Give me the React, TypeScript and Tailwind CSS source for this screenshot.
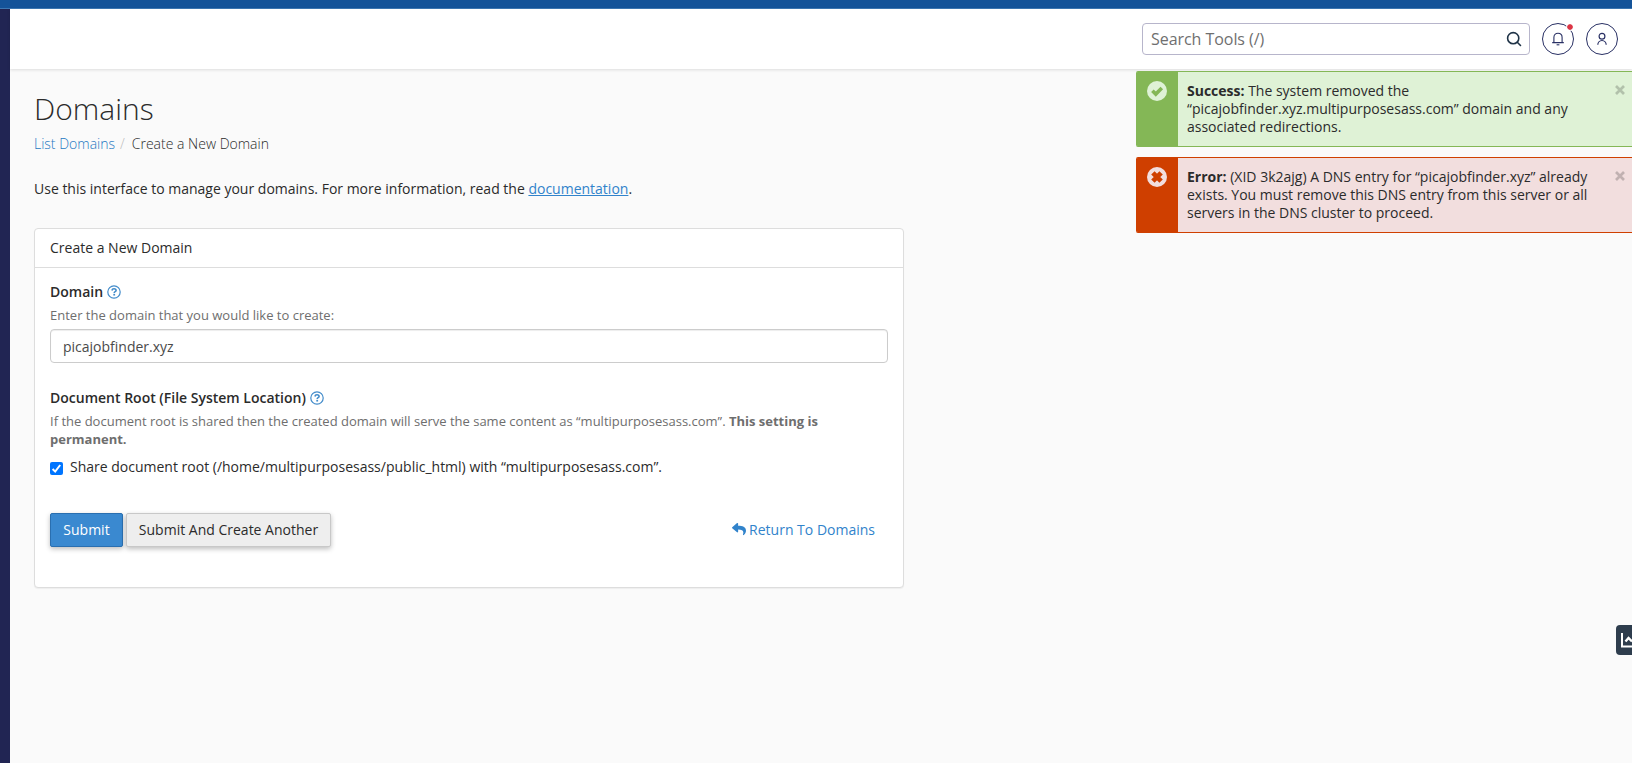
import React from 'react';
import { FaReply } from 'react-icons/fa';

interface AlertProps {
  type: 'success' | 'error';
  label: string;
  children: React.ReactNode;
}

const alertStyles = {
  success: { box: 'border-[#84b756] bg-[#dff2d6]', side: 'bg-[#84b756]', icon: 'text-[#dff2d6]' },
  error: { box: 'border-[#cf3f00] bg-[#f2dede]', side: 'bg-[#cf3f00]', icon: 'text-[#f2dede]' },
};

const Alert: React.FC<AlertProps> = ({ type, label, children }) => {
  const styles = alertStyles[type];

  return (
    <div className={`flex h-[76px] rounded-l-[2px] border-y overflow-hidden ${styles.box}`}>
      <div className={`-my-px flex w-[42px] shrink-0 justify-center pt-[10px] ${styles.side}`}>
        <svg viewBox="0 0 20 20" className={`h-5 w-5 ${styles.icon}`}>
          <circle cx="10" cy="10" r="10" fill="currentColor" />
          {type === 'success' ? (
            <path d="M5.4 9.7l3.4 3.4 6-6" fill="none" stroke="#84b756" strokeWidth="3.6" />
          ) : (
            <path d="M5.9 5.9l8.2 8.2M14.1 5.9l-8.2 8.2" fill="none" stroke="#cf3f00" strokeWidth="4.8" />
          )}
        </svg>
      </div>
      <p className="w-[412px] shrink-0 pl-[9px] pt-[10px] text-[14px] leading-[18px] text-[#2b2b2b]">
        <strong className="font-bold">{label}</strong> {children}
      </p>
      <button className="ml-auto mr-[7px] mt-[13px] h-[10px] w-[10px]" aria-label="Close">
        <svg viewBox="0 0 10 10" className="h-[10px] w-[10px] text-black/20">
          <path d="M1 1l8 8M9 1l-8 8" stroke="currentColor" strokeWidth="2.7" />
        </svg>
      </button>
    </div>
  );
};

const HelpIcon: React.FC = () => (
  <svg viewBox="0 0 14 14" className="h-[14px] w-[14px] text-[#428bca]" fill="none" stroke="currentColor">
    <circle cx="7" cy="7" r="6.2" strokeWidth="1.2" />
    <path d="M4.9 5.5c.2-1.2 1-1.8 2.1-1.8s2.1.7 2.1 1.7c0 1.3-1.9 1.2-1.9 2.5" strokeWidth="1.6" />
    <path d="M6.3 9.7h1.8" strokeWidth="1.7" />
  </svg>
);

const Header: React.FC = () => (
  <header className="relative flex h-[60px] items-center justify-end bg-white pr-[14px] shadow-[0_1px_3px_rgba(0,0,0,0.12)]">
    <div className="flex h-8 w-[388px] items-center justify-between rounded-[4px] border border-[#b7b5cb] pl-2 pr-[7px]">
      <span className="text-[16px] tracking-[-0.05px] text-[#6f6f6f]">Search Tools (/)</span>
      <svg viewBox="0 0 16 16" className="h-4 w-4 text-[#1f3347]" fill="none" stroke="currentColor" strokeWidth="1.6">
        <circle cx="7.2" cy="7.2" r="5.6" />
        <path d="M11.3 11.3l3.2 3.2" strokeLinecap="round" />
      </svg>
    </div>
    <button className="relative ml-3 flex h-8 w-8 items-center justify-center rounded-full border border-[#293064] text-[#293064]">
      <svg viewBox="0 0 14 14" className="h-[14px] w-[14px]" fill="none" stroke="currentColor" strokeWidth="1.1">
        <path d="M1.2 10.6h11.6M2.9 10.6V5.4c0-2.5 1.7-4.1 4.1-4.1s4.1 1.6 4.1 4.1v5.2" />
        <path d="M5.6 12.8h2.8" />
      </svg>
      <span className="absolute right-0 top-0 h-[6px] w-[6px] rounded-full bg-[#dc3545] outline-1 outline-white" />
    </button>
    <button className="ml-3 flex h-8 w-8 items-center justify-center rounded-full border border-[#293064] text-[#293064]">
      <svg viewBox="0 0 14 14" className="h-[14px] w-[14px]" fill="none" stroke="currentColor" strokeWidth="1.2">
        <circle cx="7" cy="4.2" r="2.9" />
        <path d="M2.8 12.8c.1-2.2 1.7-4.3 4.2-4.3s4.1 2.1 4.2 4.3" />
      </svg>
    </button>
  </header>
);

const DomainForm: React.FC = () => (
  <section className="mt-[29px] h-[360px] w-[870px] rounded-[4px] border border-[#ddd] bg-white shadow-[0_1px_1px_rgba(0,0,0,0.05)]">
    <h2 className="h-[39px] border-b border-[#ddd] px-[15px] pt-[9px] text-[14px] leading-5">Create a New Domain</h2>
    <div className="px-[15px] pt-[14px]">
      <div className="flex items-center gap-1 text-[14px] font-semibold leading-5">
        Domain <HelpIcon />
      </div>
      <p className="mt-1 text-[13px] leading-[18px] text-[#6e6e6e]">Enter the domain that you would like to create:</p>
      <input
        className="mt-[5px] block h-[34px] w-full rounded-[4px] border border-[#ccc] bg-white px-3 text-[14px] text-[#4a4a4a] shadow-[inset_0_1px_1px_rgba(0,0,0,0.075)]"
        defaultValue="picajobfinder.xyz"
      />
      <div className="mt-[25px] flex items-center gap-1 text-[14px] font-semibold leading-5">
        Document Root (File System Location) <HelpIcon />
      </div>
      <p className="mt-1 w-[800px] text-[13px] leading-[18px] text-[#6e6e6e]">
        If the document root is shared then the created domain will serve the same content as “multipurposesass.com”.{' '}
        <strong className="font-bold">This setting is permanent.</strong>
      </p>
      <label className="mt-[9px] flex text-[14px] leading-5">
        <span className="mr-[7px] mt-[5px] h-[13px] w-[13px] rounded-[2px] bg-[#0075ff]">
          <svg viewBox="0 0 13 13" className="h-[13px] w-[13px]" fill="none" stroke="white" strokeWidth="2">
            <path d="M2.6 7l2.6 2.6 5-6.6" />
          </svg>
        </span>
        Share document root (/home/multipurposesass/public_html) with “multipurposesass.com”.
      </label>
      <div className="mt-[36px] flex items-center text-[14px]">
        <button className="h-[34px] w-[73px] rounded-[2px] border border-[#2a6fb0] bg-[#3a89d0] pb-[2px] font-medium text-white shadow-[0_2px_5px_rgba(0,0,0,0.26)]">
          Submit
        </button>
        <button className="ml-[3px] h-[34px] w-[205px] rounded-[2px] border border-[#c8c8c8] bg-[#eee] pb-[2px] shadow-[0_2px_5px_rgba(0,0,0,0.26)]">
          Submit And Create Another
        </button>
        <a href="#" className="ml-auto mr-[13px] flex items-center gap-[3px] pb-[2px] text-[#3183cb]">
          <FaReply className="h-[14px] w-[14px]" />
          Return To Domains
        </a>
      </div>
    </div>
  </section>
);

const App: React.FC = () => {
  return (
    <div className="relative flex h-[763px] w-[1632px] flex-col overflow-hidden bg-[#fafafa] font-['Open_Sans','Noto_Sans',sans-serif] text-[#2b2b2b]">
      <div className="h-[9px] shrink-0 border-b border-[#3d78b4] bg-[#145399]" />
      <div className="flex flex-1">
        <aside className="w-[10px] shrink-0 bg-[#212553]" />
        <div className="flex-1">
          <Header />
          <main className="pl-6">
            <h1 className="pt-[20px] text-[30px] font-light leading-[40px]">Domains</h1>
            <nav className="mt-[5px] flex text-[14px] font-light leading-5">
              <a href="#" className="text-[#2478c2]">List Domains</a>
              <span className="ml-[5px] mr-[7px] text-[#bbb]">/</span>
              <span>Create a New Domain</span>
            </nav>
            <p className="mt-[25px] text-[14px] leading-5">
              Use this interface to manage your domains. For more information, read the{' '}
              <a href="#" className="text-[#3183cb] underline">documentation</a>.
            </p>
            <DomainForm />
          </main>
        </div>
      </div>

      {/* Notices */}
      <div className="absolute right-0 top-[71px] flex w-[496px] flex-col gap-[10px]">
        <Alert type="success" label="Success:">
          The system removed the “picajobfinder.xyz.multipurposesass.com” domain and any associated redirections.
        </Alert>
        <Alert type="error" label="Error:">
          (XID 3k2ajg) A DNS entry for “picajobfinder.xyz” already exists. You must remove this DNS entry from this server or all servers in the DNS cluster to proceed.
        </Alert>
      </div>

      {/* Analytics tab */}
      <div className="absolute right-0 top-[625px] h-[30px] w-4 overflow-hidden rounded-l-[4px] bg-[#2e3d4d]">
        <svg viewBox="0 0 16 30" className="h-[30px] w-4" fill="none" stroke="white" strokeWidth="2">
          <path d="M6 8v13.5h10" />
          <path d="M9.5 16.5l3-3.5 3.5 3.5" strokeWidth="2.4" />
        </svg>
      </div>
    </div>
  );
};

export default App;
